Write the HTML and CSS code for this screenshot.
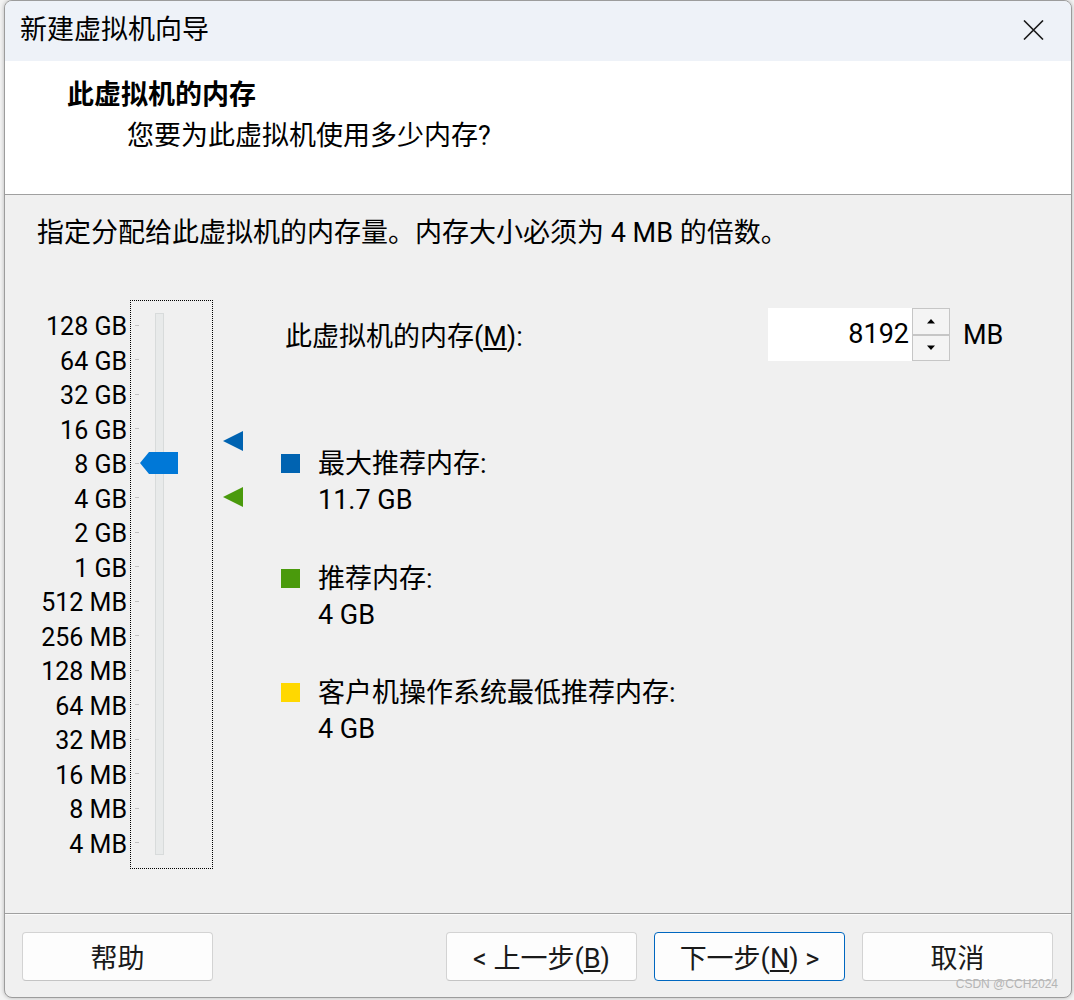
FILE: index.html
```html
<!DOCTYPE html>
<html lang="zh-CN">
<head>
<meta charset="utf-8">
<title>新建虚拟机向导</title>
<link rel="stylesheet" href="styles.css">
</head>
<body>
<div class="window">
  <div class="titlebar">
    <span class="title">新建虚拟机向导</span>
    <svg class="close" width="21" height="20" viewBox="0 0 21 20" aria-label="关闭"><path d="M1 0.5 L20 19.5 M20 0.5 L1 19.5" stroke="#1a1a1a" stroke-width="1.6" fill="none"/></svg>
  </div>
  <div class="header">
    <div class="h-title">此虚拟机的内存</div>
    <div class="h-sub">您要为此虚拟机使用多少内存?</div>
  </div>
  <div class="content">
    <p class="intro">指定分配给此虚拟机的内存量。内存大小必须为 4 MB 的倍数。</p>
    <div class="mem">
      <div class="scale">
        <div>128 GB</div>
        <div>64 GB</div>
        <div>32 GB</div>
        <div>16 GB</div>
        <div>8 GB</div>
        <div>4 GB</div>
        <div>2 GB</div>
        <div>1 GB</div>
        <div>512 MB</div>
        <div>256 MB</div>
        <div>128 MB</div>
        <div>64 MB</div>
        <div>32 MB</div>
        <div>16 MB</div>
        <div>8 MB</div>
        <div>4 MB</div>
      </div>
      <div class="slider">
        <div class="ticks">
          <span></span><span></span><span></span><span></span>
          <span></span><span></span><span></span><span></span>
          <span></span><span></span><span></span><span></span>
          <span></span><span></span><span></span><span></span>
        </div>
        <div class="track"></div>
        <svg class="thumb" width="38" height="22" viewBox="0 0 38 22"><polygon points="0,11 9,0 38,0 38,22 9,22" fill="#0078d7"/></svg>
      </div>
      <div class="markers">
        <svg class="marker marker-max" width="20" height="20" viewBox="0 0 20 20"><polygon points="0,10 20,0 20,20" fill="#0063b1"/></svg>
        <svg class="marker marker-rec" width="20" height="20" viewBox="0 0 20 20"><polygon points="0,10 20,0 20,20" fill="#4a9a0c"/></svg>
      </div>
      <div class="panel">
        <div class="mem-input">
          <label class="mem-label">此虚拟机的内存(<u>M</u>):</label>
          <div class="spin">
            <div class="spin-value">8192</div>
            <div class="spin-btns">
              <div class="spin-btn"><svg width="8" height="5" viewBox="0 0 8 5"><polygon points="4,0 8,4.5 0,4.5" fill="#000"/></svg></div>
              <div class="spin-btn"><svg width="8" height="5" viewBox="0 0 8 5"><polygon points="0,0.5 8,0.5 4,5" fill="#000"/></svg></div>
            </div>
          </div>
          <span class="unit">MB</span>
        </div>
        <div class="legend">
          <div class="item">
            <span class="sq sq-blue"></span>
            <div><div>最大推荐内存:</div><div>11.7 GB</div></div>
          </div>
          <div class="item">
            <span class="sq sq-green"></span>
            <div><div>推荐内存:</div><div>4 GB</div></div>
          </div>
          <div class="item">
            <span class="sq sq-yellow"></span>
            <div><div>客户机操作系统最低推荐内存:</div><div>4 GB</div></div>
          </div>
        </div>
      </div>
    </div>
  </div>
  <div class="footer">
    <button class="btn btn-help">帮助</button>
    <button class="btn">&lt; 上一步(<u>B</u>)</button>
    <button class="btn btn-primary">下一步(<u>N</u>) &gt;</button>
    <button class="btn">取消</button>
  </div>
  <div class="watermark">CSDN @CCH2024</div>
</div>
</body>
</html>
```

FILE: styles.css
```css
* { box-sizing: border-box; }
html, body { margin: 0; padding: 0; }
body {
  width: 1074px;
  height: 1000px;
  overflow: hidden;
  background: #f3f3f3;
  font-family: Roboto, "Noto Sans CJK SC", sans-serif;
  color: #000;
}
.window {
  position: relative;
  margin-left: 4px;
  width: 1068px;
  height: 998px;
  border: 1px solid #9c9c9c;
  border-radius: 8px;
  background: #f0f0f0;
  overflow: hidden;
  box-shadow: 0 0 4px rgba(0, 0, 0, 0.25);
}
.titlebar {
  height: 60px;
  background: #eef2f8;
  display: flex;
  align-items: center;
  padding: 0 27px 2px 15px;
}
.title {
  flex: 1;
  font-size: 27px;
  line-height: 36px;
}
.close { display: block; }
.header {
  height: 134px;
  background: #fff;
  border-bottom: 1px solid #a0a0a0;
  padding: 16px 0 0 62px;
}
.h-title {
  font-size: 27px;
  font-weight: bold;
  line-height: 36px;
}
.h-sub {
  font-size: 27px;
  line-height: 36px;
  margin: 5px 0 0 60px;
}
.content {
  height: 718px;
  padding-top: 20px;
}
.intro {
  margin: 0;
  padding-left: 32px;
  font-size: 27px;
  line-height: 36px;
}
.mem {
  display: flex;
  align-items: flex-start;
  margin-top: 49px;
}
.scale {
  width: 122px;
  padding-top: 10px;
  text-align: right;
  font-size: 25px;
}
.scale div {
  height: 34.5px;
  line-height: 34.5px;
}
.slider {
  position: relative;
  width: 83px;
  height: 569px;
  margin-left: 3px;
  border: 1px dotted #000;
  display: flex;
  align-items: flex-start;
}
.ticks {
  margin-left: 4px;
  width: 4px;
  padding-top: 7px;
}
.ticks span {
  display: flex;
  align-items: center;
  height: 34.5px;
}
.ticks span::before {
  content: "";
  width: 4px;
  height: 1px;
  background: #c4c4c4;
}
.track {
  margin-left: 16px;
  margin-top: 12px;
  width: 9px;
  height: 542px;
  background: #e8eaea;
  border: 1px solid #d8dbdb;
}
.thumb {
  position: absolute;
  left: 9px;
  top: 151px;
}
.markers {
  position: relative;
  width: 68px;
  height: 569px;
}
.marker {
  position: absolute;
  left: 10px;
}
.marker-max { top: 131px; }
.marker-rec { top: 187px; }
.panel { flex: 1; }
.mem-input {
  display: flex;
  align-items: center;
  margin-top: 8px;
  height: 53px;
}
.mem-label {
  width: 487px;
  padding-left: 4px;
  font-size: 27px;
}
.spin {
  display: flex;
  height: 53px;
}
.spin-value {
  width: 144px;
  background: #fff;
  text-align: right;
  font-size: 27px;
  line-height: 53px;
  padding-right: 3px;
}
.spin-btns {
  width: 38px;
  display: flex;
  flex-direction: column;
}
.spin-btn {
  flex: 1;
  border: 1px solid #c6c6c6;
  background: #f4f4f4;
  display: flex;
  align-items: center;
  justify-content: center;
}
.spin-btn svg { display: block; }
.unit {
  margin-left: 13px;
  font-size: 27px;
}
.legend {
  margin-top: 85px;
  display: flex;
  flex-direction: column;
  gap: 42.5px;
}
.item {
  display: flex;
  align-items: flex-start;
  font-size: 27px;
  line-height: 36px;
}
.sq {
  flex: none;
  width: 19px;
  height: 19px;
  margin-top: 8px;
  margin-right: 18px;
}
.sq-blue { background: #0063b1; }
.sq-green { background: #4a9a0c; }
.sq-yellow { background: #ffd800; }
.footer {
  height: 84px;
  border-top: 1px solid #a0a0a0;
  box-shadow: inset 0 1px 0 #fafafa;
  padding: 18px 18px 0 17px;
  display: flex;
  align-items: flex-start;
  gap: 17px;
}
.btn {
  width: 191px;
  height: 49px;
  background: #fdfdfd;
  border: 1px solid #d3d3d3;
  border-bottom-color: #c4c4c4;
  border-radius: 4px;
  font-family: inherit;
  font-size: 27px;
  color: #1a1a1a;
  padding: 0;
}
.btn-help { margin-right: auto; }
.btn-primary { border-color: #0067c0; }
.watermark {
  position: absolute;
  right: 13px;
  bottom: 6px;
  font-family: "Liberation Sans", sans-serif;
  font-size: 12px;
  color: #b5b5b5;
}
```
